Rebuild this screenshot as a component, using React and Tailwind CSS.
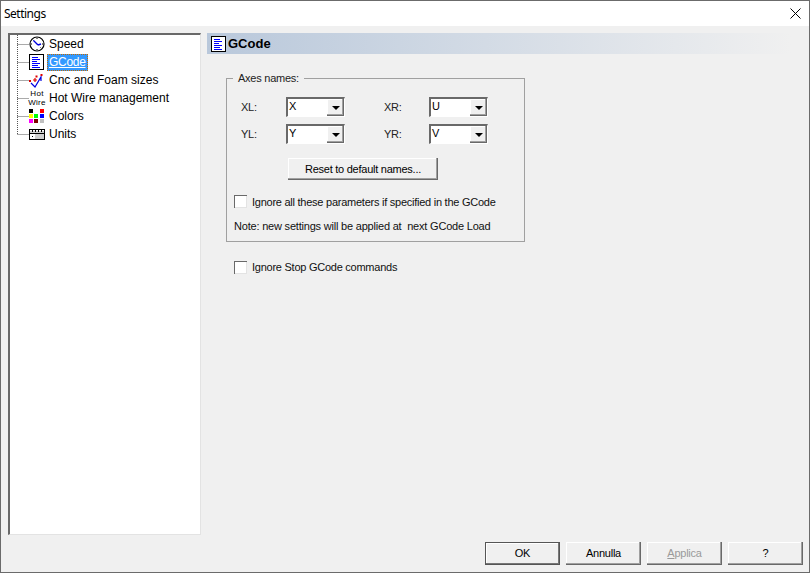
const treeFont = "font-['Noto_Sans',sans-serif]";
const smallText = "text-[11px] tracking-[-0.25px]";

function ClockIcon() {
  return (
    <svg width="16" height="16" viewBox="0 0 16 16">
      <circle cx="8" cy="8" r="7" fill="#fff" stroke="#000" strokeWidth="1.2" />
      <path d="M8 2v1M8 13v1M2 8h1M13 8h1M3.8 3.8l.7.7M11.5 11.5l.7.7" stroke="#000" />
      <path d="M4.5 4.5l4.5 4.5M9 9l3-1" stroke="#0000e0" strokeWidth="1.4" />
    </svg>
  );
}

function DocIcon() {
  return (
    <svg width="15" height="16" viewBox="0 0 15 16" shapeRendering="crispEdges">
      <rect x="0.5" y="0.5" width="14" height="15" fill="#fff" stroke="#000" />
      <path d="M3 3.5h6M3 5.5h8M3 7.5h5M3 9.5h8M3 11.5h6M3 13.5h8" stroke="#0000ff" />
    </svg>
  );
}

function CncIcon() {
  return (
    <svg width="16" height="16" viewBox="0 0 16 16">
      <path d="M2 11l4 4 6-10v4" fill="none" stroke="#0000e0" strokeWidth="1.2" />
      <path d="M6 6v4M4 8h4" stroke="#e00000" strokeWidth="1.2" />
      <path d="M0 8h2v2H0zM6.5 3.5h2v2h-2zM11.5 2h2v2h-2z" fill="#e00000" />
    </svg>
  );
}

function HotWireIcon() {
  return (
    <div className="flex w-[16px] flex-col items-center font-['Liberation_Sans',sans-serif] text-[8px] leading-[9px] tracking-[0.3px] text-black">
      <span>Hot</span>
      <span>Wire</span>
    </div>
  );
}

function ColorsIcon() {
  const colors = ["#000000", "#ffffff", "#ff0000", "#ffff00", "#00ff00", "#0000ff", "#ff00ff", "#800000", "#c0c0c0"];
  return (
    <div className="grid w-[15px] grid-cols-3 gap-[1px]">
      {colors.map((color, i) => (
        <div key={i} className="h-[4px] w-[4px]" style={{ backgroundColor: color }} />
      ))}
    </div>
  );
}

function UnitsIcon() {
  return (
    <svg width="16" height="11" viewBox="0 0 16 11" shapeRendering="crispEdges">
      <rect x="0.5" y="0.5" width="15" height="10" fill="#cfcfcf" stroke="#000" />
      <path d="M1 1.5h14" stroke="#fff" />
      <path d="M3.5 1v2M6.5 1v2M9.5 1v2M12.5 1v2" stroke="#000" />
      <path d="M1 4.5h14" stroke="#000" />
      <rect x="1" y="5" width="5" height="5" fill="#fff" stroke="none" />
      <rect x="3" y="7" width="1" height="1" fill="#000" stroke="none" />
    </svg>
  );
}

const treeItems = [
  { label: "Speed", icon: <ClockIcon /> },
  { label: "GCode", icon: <DocIcon />, selected: true },
  { label: "Cnc and Foam sizes", icon: <CncIcon /> },
  { label: "Hot Wire management", icon: <HotWireIcon /> },
  { label: "Colors", icon: <ColorsIcon /> },
  { label: "Units", icon: <UnitsIcon />, last: true },
];

function TreeRow({ item }) {
  return (
    <div className="flex h-[18px] items-center">
      <svg width="12" height="18" viewBox="0 0 12 18" className="shrink-0">
        <path
          d={item.last ? "M0.5 0V9M0.5 9.5H12" : "M0.5 0V18M0.5 9.5H12"}
          stroke="#555"
          strokeDasharray="1 1"
          fill="none"
        />
      </svg>
      <div className="flex w-[18px] shrink-0 items-center">{item.icon}</div>
      {item.selected ? (
        <span className="flex h-[17px] items-center border border-dotted border-[#c46a00] bg-[#3399ff] px-[1px] text-[12px] tracking-[-0.3px] text-white underline">
          {item.label}
        </span>
      ) : (
        <span className="px-[2px] text-[12px] text-black">{item.label}</span>
      )}
    </div>
  );
}

function Combo({ value }) {
  return (
    <div className="flex h-[20px] w-[59px] border-t-2 border-l-2 border-r border-b border-t-[#696969] border-l-[#696969] border-r-white border-b-white bg-white">
      <span className={`flex-1 pl-[1px] leading-[15px] text-black ${smallText}`}>{value}</span>
      <div className="flex w-[17px] items-center justify-center bg-[#f0f0f0] shadow-[inset_-1px_-1px_0_#696969,inset_-2px_-2px_0_#a0a0a0,inset_1px_1px_0_#fff]">
        <div className="h-0 w-0 border-x-[4px] border-t-[4px] border-x-transparent border-t-black" />
      </div>
    </div>
  );
}

function AxisField({ label, value, className = "" }) {
  return (
    <div className={`flex items-center ${className}`}>
      <span className={`w-[45px] text-[#222] ${smallText}`}>{label}</span>
      <Combo value={value} />
    </div>
  );
}

function Checkbox({ label }) {
  return (
    <label className={`flex h-[13px] items-center gap-[5px] whitespace-nowrap text-[#111] ${smallText}`}>
      <span className="h-[13px] w-[13px] shrink-0 border-t border-l border-t-[#696969] border-l-[#696969] bg-white shadow-[inset_-1px_-1px_0_#e3e3e3]" />
      {label}
    </label>
  );
}

function DlgButton({ children, disabled, primary, className = "" }) {
  const tone = disabled ? "text-[#9a9a9a]" : "text-black";
  const edge = primary
    ? "shadow-[inset_0_0_0_1px_#555,inset_-2px_-2px_0_#777,inset_2px_2px_0_#fff]"
    : "shadow-[inset_-1px_-1px_0_#696969,inset_-2px_-2px_0_#a0a0a0,inset_1px_1px_0_#fff]";
  return (
    <button type="button" className={`bg-[#f0f0f0] ${smallText} ${edge} ${tone} ${className}`}>
      {children}
    </button>
  );
}

export default function App() {
  return (
    <div className="flex h-[573px] w-[810px] flex-col overflow-hidden border border-[#6b6b6b] bg-[#f0f0f0] font-['Liberation_Sans',sans-serif]">
      <div className="flex h-[25px] shrink-0 items-center justify-between bg-white pl-[3px] pr-[8px]">
        <span className={`${treeFont} text-[12px] tracking-[-0.5px] text-black`}>Settings</span>
        <svg width="11" height="11" viewBox="0 0 11 11">
          <path d="M0.5 0.5l10 10M10.5 0.5l-10 10" stroke="#000" />
        </svg>
      </div>

      <div className="flex flex-1 pl-[7px] pt-[7px]">
        <div className="h-[502px] w-[193px] border-t-2 border-l-2 border-r border-b border-t-[#696969] border-l-[#696969] border-r-[#e3e3e3] border-b-[#e3e3e3] bg-white pl-[7px]">
          {treeItems.map((item) => (
            <TreeRow key={item.label} item={item} />
          ))}
        </div>

        <div className="ml-[6px] flex-1">
          <div className="flex h-[21px] w-[584px] items-center gap-[2px] bg-gradient-to-r from-[#b9c8db] to-[#f0f0f0] pl-[4px]">
            <DocIcon />
            <span className="text-[13px] font-bold text-black">GCode</span>
          </div>

          <fieldset className="ml-[19px] mt-[17px] h-[171px] w-[299px] border border-[#a0a0a0] pl-[14px] pr-0">
            <legend className={`ml-[-8px] px-[5px] leading-[14px] text-[#222] ${smallText}`}>Axes names:</legend>
            <div className="flex pt-[12px]">
              <AxisField label="XL:" value="X" />
              <AxisField label="XR:" value="U" className="ml-[39px]" />
            </div>
            <div className="flex pt-[7px]">
              <AxisField label="YL:" value="Y" />
              <AxisField label="YR:" value="V" className="ml-[39px]" />
            </div>
            <div className="pl-[47px] pt-[12px]">
              <DlgButton className="h-[22px] w-[150px]">Reset to default names...</DlgButton>
            </div>
            <div className="ml-[-7px] pt-[15px]">
              <Checkbox label="Ignore all these parameters if specified in the GCode" />
            </div>
            <p className="ml-[-7px] pt-[11px] text-[11px] leading-[14px] tracking-[-0.2px] text-[#111]">
              Note: new settings will be applied at&nbsp; next GCode Load
            </p>
          </fieldset>

          <div className="ml-[27px] mt-[19px]">
            <Checkbox label="Ignore Stop GCode commands" />
          </div>
        </div>
      </div>

      <div className="flex justify-end gap-[6px] pb-[7px] pr-[6px]">
        <DlgButton primary className="h-[23px] w-[75px]">OK</DlgButton>
        <DlgButton className="h-[23px] w-[75px]">Annulla</DlgButton>
        <DlgButton disabled className="h-[23px] w-[75px]"><span className="underline">A</span>pplica</DlgButton>
        <DlgButton className="h-[23px] w-[75px]">?</DlgButton>
      </div>
    </div>
  );
}
